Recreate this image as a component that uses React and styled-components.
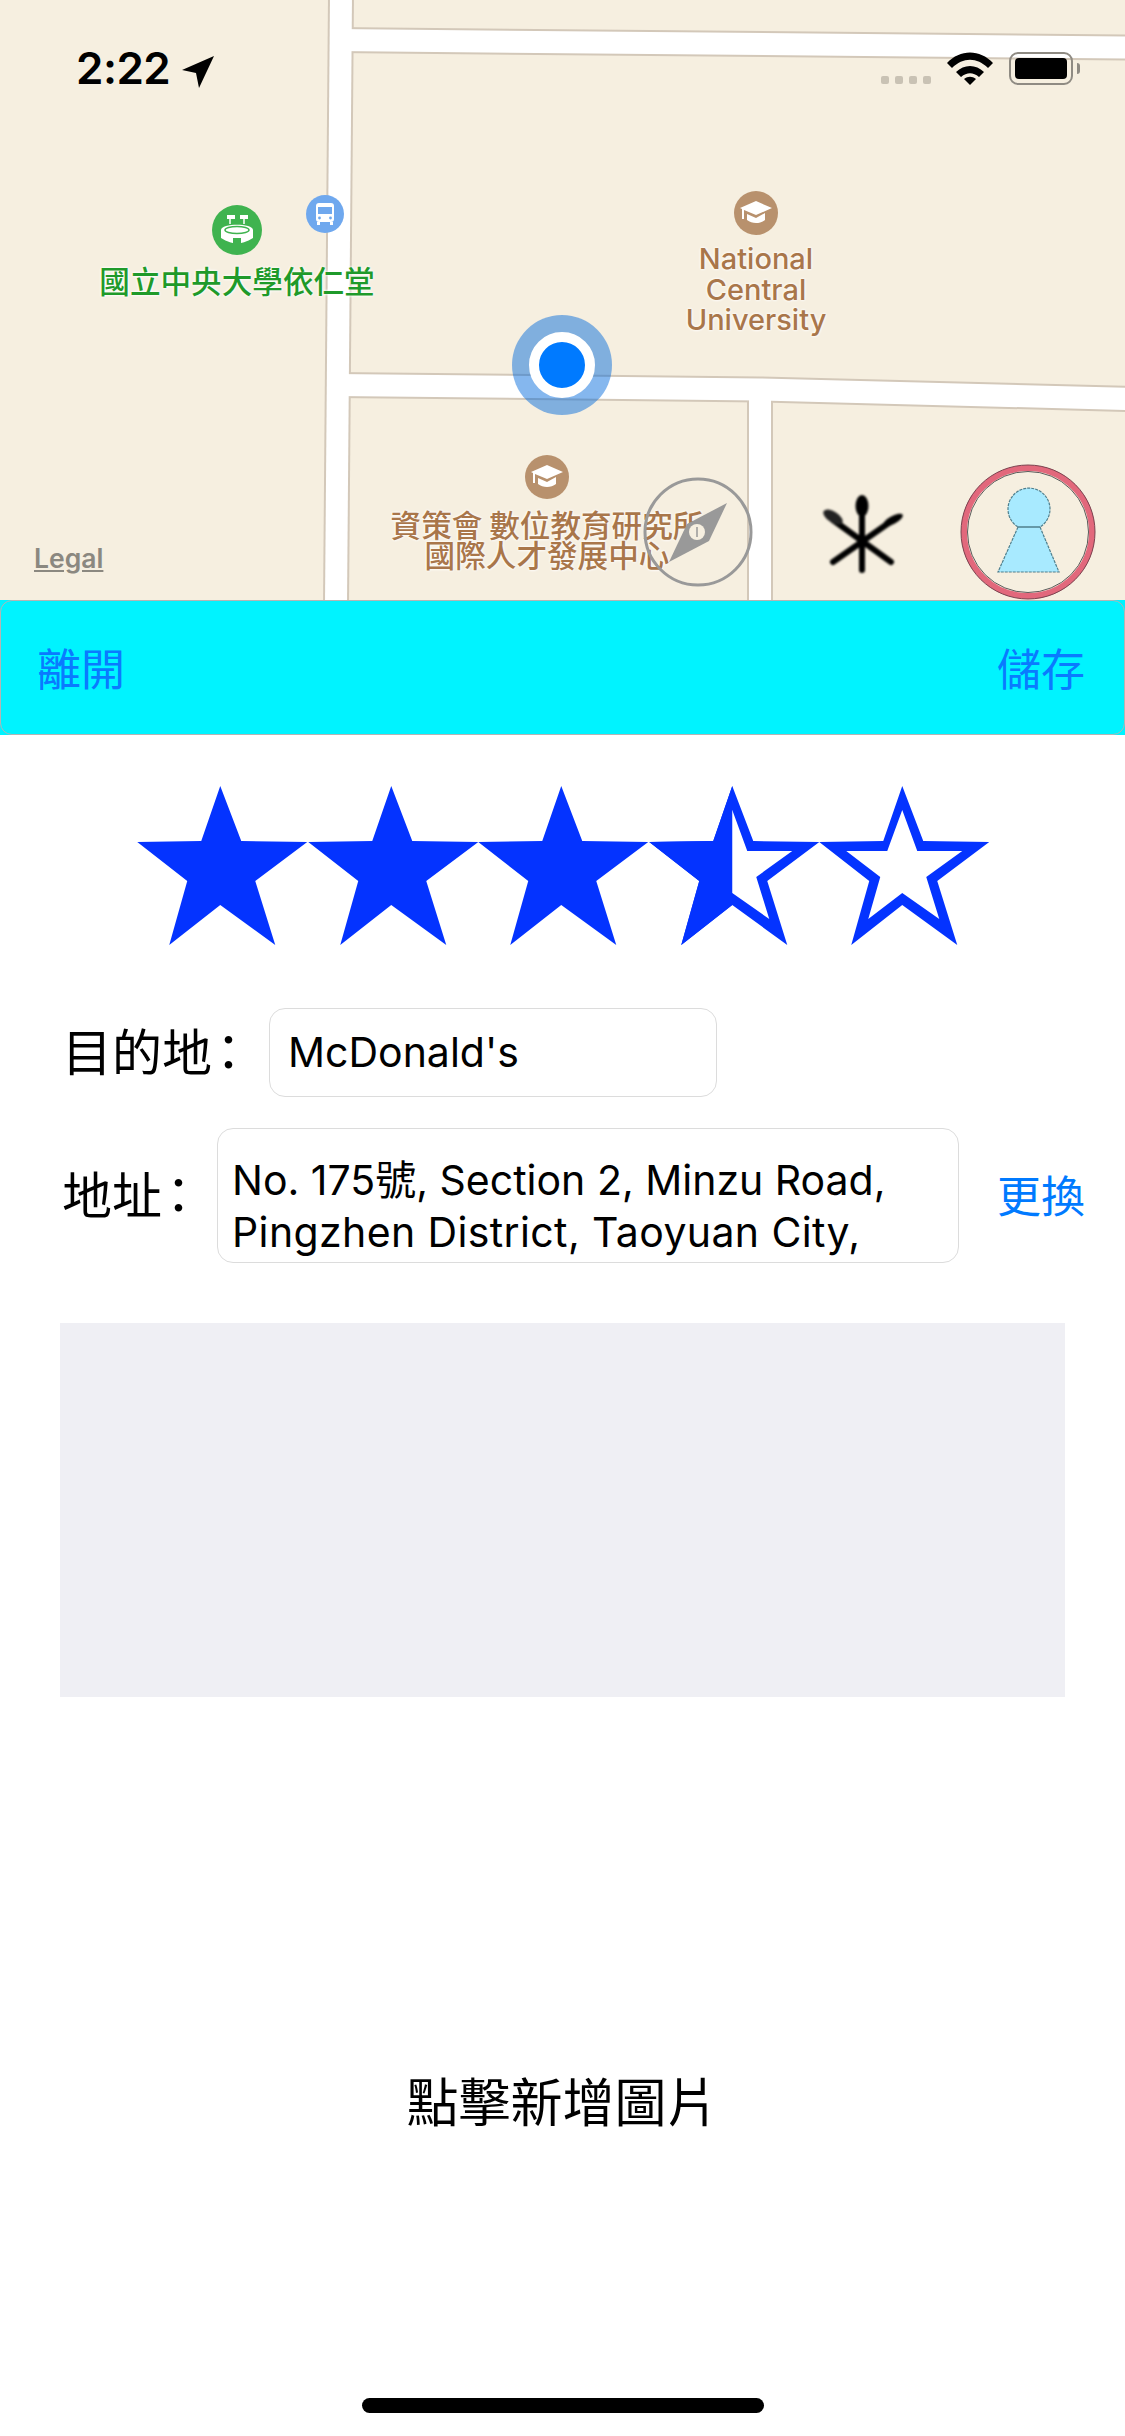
import React from "react";
import styled, { createGlobalStyle } from "styled-components";

const CJK = `"Noto Sans CJK TC", "Noto Sans CJK SC", sans-serif`;
const LATIN = `Inter, "Noto Sans CJK TC", sans-serif`;

const OUTER = "M83 0L104 55L170 56L118 95L138 159L83 119L32 159L50 95L0 56L64 55Z";
const INNER = "M83 24L98 65L143 65L107 91L120 133L83 107L49 133L61 91L27 65L68 65Z";
const LEFT_HALF = "M83 0L64 55L0 56L50 95L32 159L83 119Z";

export default function App() {
  return (
    <Page>
      <GlobalStyle />
      <MapArea>
        <Roads viewBox="0 0 1125 600">
          <g fill="none" stroke="#d3c8b9" strokeWidth="26">
            <path d="M341 -5L336 605" />
            <path d="M335 40L1130 47.5" />
            <path d="M335 385L760 389.5L1130 399" />
            <path d="M760 389L760 605" />
          </g>
          <g fill="none" stroke="#ffffff" strokeWidth="22">
            <path d="M341 -5L336 605" />
            <path d="M335 40L1130 47.5" />
            <path d="M335 385L760 389.5L1130 399" />
            <path d="M760 389L760 605" />
          </g>
        </Roads>

        <UserHalo>
          <UserCore />
        </UserHalo>

        <StatusTime>2:22</StatusTime>
        <LocationArrow viewBox="0 0 32 32">
          <path d="M32 0L0 14L14 17L17 32Z" fill="#000" />
        </LocationArrow>
        <SignalDots>
          <i />
          <i />
          <i />
          <i />
        </SignalDots>
        <Wifi viewBox="0 0 46 33">
          <path d="M0 11C13 -3 33 -3 46 11L41 16C30 5 16 5 5 16Z" fill="#000" />
          <path d="M9 20C17 12 29 12 37 20L32 25C26 20 20 20 14 25Z" fill="#000" />
          <path d="M17 27C21 24 25 24 29 27L23 33Z" fill="#000" />
        </Wifi>
        <Battery>
          <BatteryLevel />
        </Battery>
        <BatteryNub />

        <PoiDot $x={237} $y={230} $r={25} $color="#3fb34f">
          <svg width="36" height="36" viewBox="0 0 36 36">
            <rect x="8" y="3" width="8" height="4" fill="#fff" />
            <rect x="21" y="3" width="8" height="4" fill="#fff" />
            <path d="M11 7V12M25 7V12" stroke="#fff" strokeWidth="1.5" />
            <path d="M2 18C2 11 34 11 34 18V26C28 30 22 31 22 31V26H14V31C14 31 8 30 2 26Z" fill="#fff" />
            <ellipse cx="18" cy="18" rx="12" ry="3.5" fill="none" stroke="#3fb34f" strokeWidth="1.5" />
          </svg>
        </PoiDot>
        <PoiDot $x={325} $y={214} $r={19} $color="#6fa8ee">
          <svg width="22" height="24" viewBox="0 0 22 24">
            <rect x="2" y="1" width="18" height="19" rx="3" fill="#fff" />
            <rect x="4" y="5" width="14" height="7" fill="#6fa8ee" />
            <rect x="3" y="20" width="3" height="3" fill="#fff" />
            <rect x="16" y="20" width="3" height="3" fill="#fff" />
            <circle cx="5.5" cy="16" r="1.4" fill="#6fa8ee" />
            <circle cx="16.5" cy="16" r="1.4" fill="#6fa8ee" />
          </svg>
        </PoiDot>
        <PoiLabel $x={237} $y={265} $color="#1f9a2a" $size={30.6}>
          國立中央大學依仁堂
        </PoiLabel>

        <PoiDot $x={756} $y={213} $r={22} $color="#b8916d">
          <GradCap />
        </PoiDot>
        <PoiLabel $x={756} $y={244} $color="#a9764a" $size={29} $latin>
          National
          <br />
          Central
          <br />
          University
        </PoiLabel>

        <PoiDot $x={547} $y={477} $r={22} $color="#b8916d">
          <GradCap />
        </PoiDot>
        <PoiLabel $x={547} $y={509} $color="#a9764a" $size={30.6}>
          資策會 數位教育研究所
          <br />
          國際人才發展中心
        </PoiLabel>

        <Legal>Legal</Legal>

        <Compass viewBox="0 0 112 112">
          <circle cx="56" cy="56" r="53" fill="none" stroke="#999" strokeWidth="3" />
          <path d="M85 27L67 65L27 86L45 48Z" fill="#999" />
          <circle cx="55" cy="56" r="8" fill="#f6efe0" />
          <path d="M55 51V61" stroke="#999" strokeWidth="1.5" />
        </Compass>

        <Cutlery viewBox="0 0 84 80">
          <g stroke="#000" strokeWidth="6" strokeLinecap="round" fill="none">
            <path d="M41 20V76" />
            <path d="M12 68L72 26" />
            <path d="M70 68L12 26" />
          </g>
          <ellipse cx="41" cy="12" rx="6.5" ry="11" fill="#000" />
          <ellipse cx="72" cy="26" rx="11" ry="4" fill="#000" transform="rotate(-28 72 26)" />
          <ellipse cx="12" cy="23" rx="11" ry="5.5" fill="#222" transform="rotate(33 12 23)" />
        </Cutlery>

        <Person viewBox="0 0 136 136">
          <circle cx="68" cy="68" r="64" fill="none" stroke="#e2687c" strokeWidth="6" />
          <circle cx="68" cy="68" r="67" fill="none" stroke="#7a4450" strokeWidth="1" />
          <circle cx="68" cy="68" r="60.5" fill="none" stroke="#5a5a5a" strokeWidth="1" />
          <path
            d="M58 63L38 108H99L80 63A21 21 0 1 0 58 63Z"
            fill="#a8eaff"
            stroke="#4f7f8d"
            strokeWidth="1.2"
            strokeDasharray="3 1"
          />
          <path d="M58 63H80" stroke="#4f7f8d" strokeWidth="1.5" />
        </Person>
      </MapArea>

      <NavBar>
        <NavButton>離開</NavButton>
        <NavButton>儲存</NavButton>
      </NavBar>

      <Stars>
        {["full", "full", "full", "half", "empty"].map((kind, i) => (
          <Star key={i} viewBox="0 0 170 160">
            {kind === "full" ? (
              <path d={OUTER} fill="#0433ff" />
            ) : (
              <path d={OUTER + INNER} fill="#0433ff" fillRule="evenodd" />
            )}
            {kind === "half" && <path d={LEFT_HALF} fill="#0433ff" />}
          </Star>
        ))}
      </Stars>

      <NameRow>
        <FieldLabel $width={207}>
          目的地<Colon>：</Colon>
        </FieldLabel>
        <NameBox>McDonald's</NameBox>
      </NameRow>

      <AddressRow>
        <FieldLabel $width={155}>
          地址<Colon>：</Colon>
        </FieldLabel>
        <AddressBox>
          No. 175號, Section 2, Minzu Road,
          <br />
          <WideLine>Pingzhen District, Taoyuan City,</WideLine>
        </AddressBox>
        <ChangeButton>更換</ChangeButton>
      </AddressRow>

      <PhotoBox />
      <AddPhoto>點擊新增圖片</AddPhoto>
      <HomeBar />
    </Page>
  );
}

function GradCap() {
  return (
    <svg width="32" height="26" viewBox="0 0 32 26">
      <path d="M16 1L32 8L16 15L4 10V19H2V9L0 8Z" fill="#fff" />
      <path d="M7 14L16 18L25 13V20C20 24 12 24 7 20Z" fill="#fff" />
    </svg>
  );
}

const GlobalStyle = createGlobalStyle`
  html, body {
    margin: 0;
    background: #ffffff;
  }
`;

const Page = styled.div`
  width: 1125px;
  height: 2436px;
  overflow: hidden;
  display: flex;
  flex-direction: column;
  background: #ffffff;
  font-family: ${CJK};
`;

const MapArea = styled.div`
  position: relative;
  flex: none;
  height: 600px;
  overflow: hidden;
  background: #f6efe0;
`;

const Roads = styled.svg`
  position: absolute;
  left: 0;
  top: 0;
  width: 1125px;
  height: 600px;
`;

const UserHalo = styled.div`
  position: absolute;
  left: 512px;
  top: 315px;
  width: 100px;
  height: 100px;
  display: flex;
  align-items: center;
  justify-content: center;
  border-radius: 50%;
  background: rgba(0, 105, 220, 0.48);
`;

const UserCore = styled.div`
  box-sizing: border-box;
  width: 66px;
  height: 66px;
  border-radius: 50%;
  background: #007aff;
  border: 10px solid #ffffff;
`;

const StatusTime = styled.div`
  position: absolute;
  left: 76px;
  top: 41px;
  font: 600 44px/54px ${LATIN};
  letter-spacing: -0.5px;
  color: #000;
`;

const LocationArrow = styled.svg`
  position: absolute;
  left: 182px;
  top: 56px;
  width: 32px;
  height: 32px;
`;

const SignalDots = styled.div`
  position: absolute;
  left: 881px;
  top: 76px;
  display: flex;
  gap: 6px;

  i {
    width: 8px;
    height: 8px;
    border-radius: 2px;
    background: #c9c2b4;
  }
`;

const Wifi = styled.svg`
  position: absolute;
  left: 947px;
  top: 52px;
  width: 46px;
  height: 33px;
`;

const Battery = styled.div`
  position: absolute;
  left: 1009px;
  top: 52px;
  width: 64px;
  height: 33px;
  box-sizing: border-box;
  padding: 4px;
  border: 2px solid #8f8b83;
  border-radius: 9px;
`;

const BatteryLevel = styled.div`
  width: 100%;
  height: 100%;
  border-radius: 4px;
  background: #000;
`;

const BatteryNub = styled.div`
  position: absolute;
  left: 1077px;
  top: 63px;
  width: 3px;
  height: 11px;
  border-radius: 0 3px 3px 0;
  background: #8f8b83;
`;

const PoiDot = styled.div`
  position: absolute;
  left: ${(p) => p.$x - p.$r}px;
  top: ${(p) => p.$y - p.$r}px;
  width: ${(p) => p.$r * 2}px;
  height: ${(p) => p.$r * 2}px;
  display: flex;
  align-items: center;
  justify-content: center;
  border-radius: 50%;
  background: ${(p) => p.$color};
`;

const PoiLabel = styled.div`
  position: absolute;
  left: ${(p) => p.$x}px;
  top: ${(p) => p.$y}px;
  transform: translateX(-50%);
  white-space: nowrap;
  text-align: center;
  color: ${(p) => p.$color};
  font-family: ${(p) => (p.$latin ? LATIN : CJK)};
  font-size: ${(p) => p.$size}px;
  font-weight: 500;
  line-height: ${(p) => (p.$latin ? 30.5 : 30)}px;
  text-shadow: 0 0 3px #fff, 0 0 3px #fff;
`;

const Legal = styled.div`
  position: absolute;
  left: 34px;
  top: 542px;
  font: 600 26.5px/32px ${LATIN};
  color: #8b8880;
  text-decoration: underline;
`;

const Compass = styled.svg`
  position: absolute;
  left: 642px;
  top: 476px;
  width: 112px;
  height: 112px;
`;

const Cutlery = styled.svg`
  position: absolute;
  left: 821px;
  top: 494px;
  width: 84px;
  height: 80px;
  filter: blur(1px);
`;

const Person = styled.svg`
  position: absolute;
  left: 960px;
  top: 464px;
  width: 136px;
  height: 136px;
`;

const NavBar = styled.div`
  position: relative;
  flex: none;
  box-sizing: border-box;
  height: 135px;
  padding: 0 40px 0 37px;
  display: flex;
  align-items: center;
  justify-content: space-between;
  background: #00f3ff;

  &::after {
    content: "";
    position: absolute;
    inset: 0;
    border: 1.5px solid #b4b4b4;
    border-radius: 12px;
  }
`;

const NavButton = styled.div`
  font-size: 44px;
  line-height: 60px;
  margin-top: -2px;
  color: #0a7aff;
`;

const Stars = styled.div`
  flex: none;
  margin-top: 51px;
  padding-left: 2px;
  display: flex;
  justify-content: center;
`;

const Star = styled.svg`
  width: 170.5px;
  height: 160px;
  flex: none;
`;

const NameRow = styled.div`
  flex: none;
  margin-top: 62px;
  padding-left: 62px;
  display: flex;
  align-items: center;
`;

const AddressRow = styled.div`
  flex: none;
  margin-top: 31px;
  padding-left: 62px;
  display: flex;
  align-items: center;
`;

const FieldLabel = styled.div`
  flex: none;
  width: ${(p) => p.$width}px;
  margin-top: -8px;
  font-size: 50px;
  line-height: 60px;
  color: #000;
`;

const Colon = styled.span`
  font-feature-settings: "palt";
  padding-left: 4px;
`;

const NameBox = styled.div`
  box-sizing: border-box;
  width: 448px;
  height: 89px;
  padding: 0 0 2px 18px;
  display: flex;
  align-items: center;
  font: 400 41px/50px ${LATIN};
  color: #000;
  border: 1.5px solid #dcdcdc;
  border-radius: 16px;
`;

const AddressBox = styled.div`
  box-sizing: border-box;
  width: 742px;
  height: 135px;
  padding: 25px 0 0 14px;
  font: 400 41px/52px ${LATIN};
  white-space: nowrap;
  color: #000;
  border: 1.5px solid #dcdcdc;
  border-radius: 16px;
`;

const WideLine = styled.span`
  letter-spacing: 0.38px;
`;

const ChangeButton = styled.div`
  margin: -4px 0 0 38px;
  font-size: 44px;
  line-height: 60px;
  color: #007aff;
`;

const PhotoBox = styled.div`
  flex: none;
  height: 374px;
  margin: 60px 60px 0;
  background: #efeff4;
`;

const AddPhoto = styled.div`
  flex: none;
  margin-top: 368px;
  height: 70px;
  text-align: center;
  font-size: 52px;
  line-height: 70px;
  color: #000;
`;

const HomeBar = styled.div`
  flex: none;
  align-self: center;
  width: 402px;
  height: 15px;
  margin-top: 263px;
  border-radius: 8px;
  background: #000;
`;
